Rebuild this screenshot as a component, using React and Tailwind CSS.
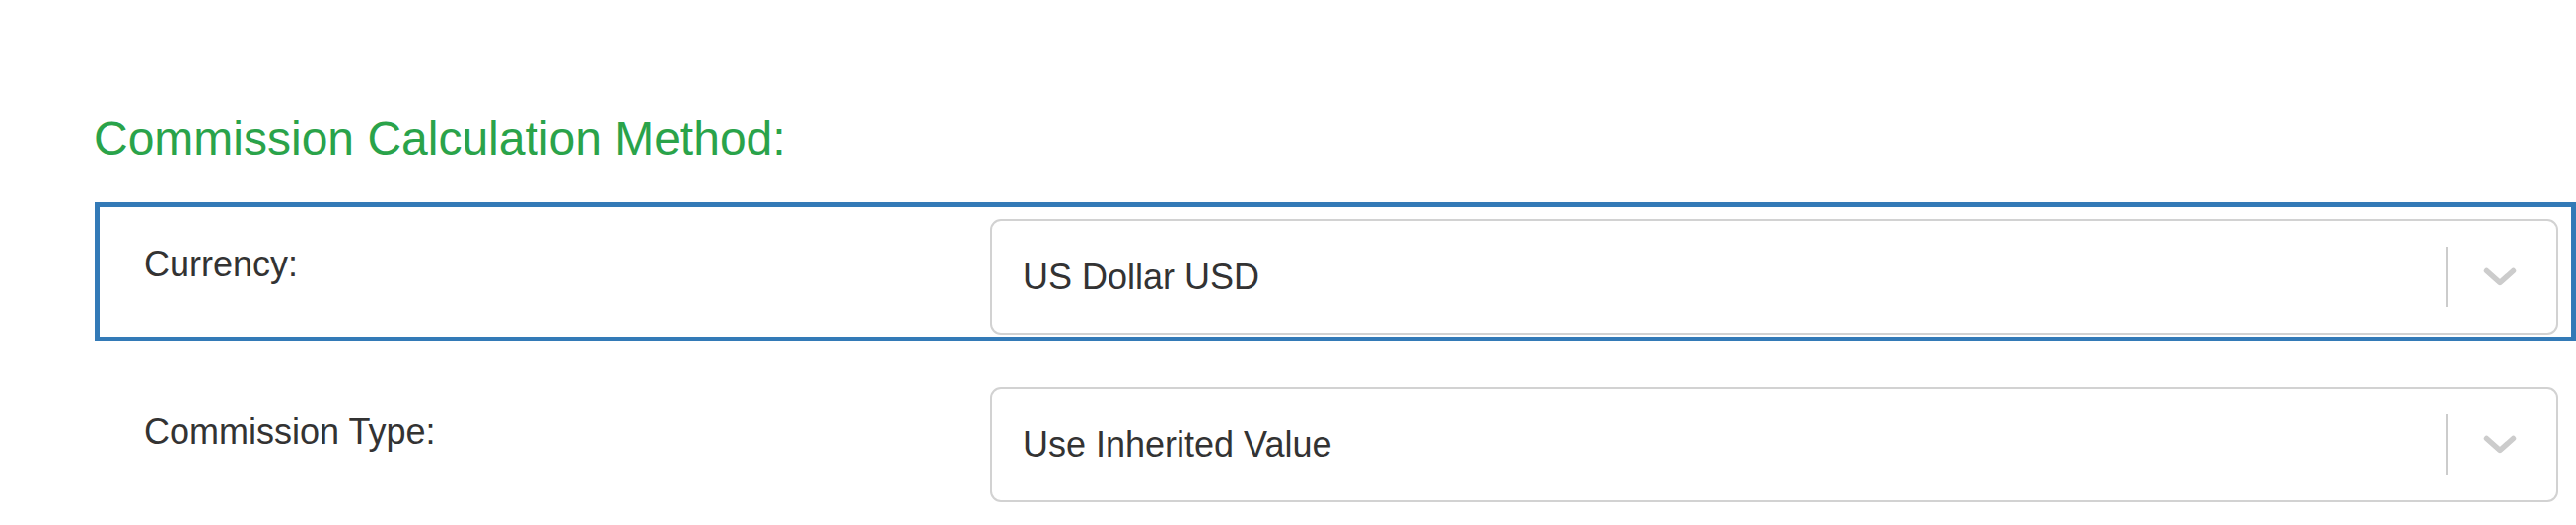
const fields = [
  { label: 'Currency:', value: 'US Dollar USD', focused: true },
  { label: 'Commission Type:', value: 'Use Inherited Value', focused: false },
]

const Chevron = () => (
  <svg width="34" height="19" viewBox="0 0 34 19" fill="none">
    <polyline
      points="3.5,3.5 17,15.5 30.5,3.5"
      stroke="#cccccc"
      strokeWidth="5.5"
      strokeLinecap="round"
      strokeLinejoin="round"
    />
  </svg>
)

const SelectBox = ({ value }) => (
  <div className="flex-1 h-[117px] flex items-center border-2 border-[#d2d2d2] rounded-[11px] bg-white pl-[31px]">
    <span className="flex-1 text-[36px] leading-none text-[#333333]">{value}</span>
    <span className="w-[2px] h-[61px] bg-[#cccccc]" />
    <div className="w-[110px] pr-[4px] flex justify-center">
      <Chevron />
    </div>
  </div>
)

export default function App() {
  return (
    <div
      className="w-full h-[532px] bg-white pl-[96px] overflow-hidden"
      style={{ fontFamily: '"Liberation Sans", Arial, sans-serif' }}
    >
      <h2 className="pt-[117px] -ml-[1px] text-[48px] leading-none font-normal text-[#2aa34a]">
        Commission Calculation Method:
      </h2>

      <div className="mt-[40px] flex flex-col gap-[29px]">
        {fields.map((f) => (
          <div
            key={f.label}
            className={`flex items-start border-[5px] pt-[12px] pb-[2px] pr-[13px] ${
              f.focused ? 'border-[#337ab7]' : 'border-transparent'
            }`}
          >
            <label className="w-[903px] pl-[45px] pt-[28px] text-[36px] leading-none text-[#333333]">
              {f.label}
            </label>
            <SelectBox value={f.value} />
          </div>
        ))}
      </div>
    </div>
  )
}
